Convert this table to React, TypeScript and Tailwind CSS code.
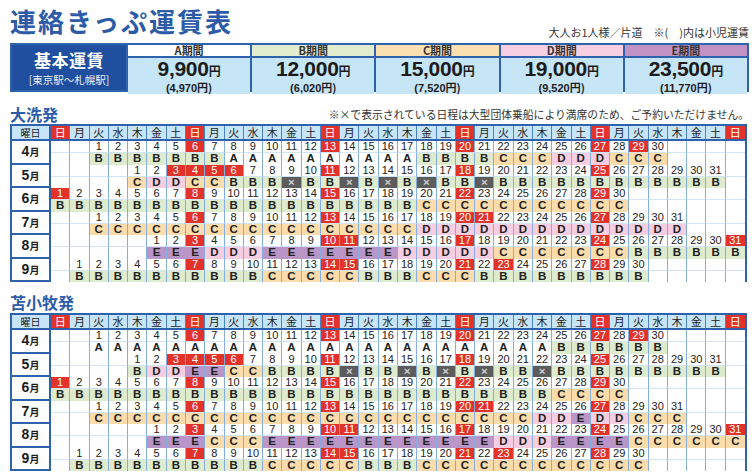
import React from 'react';

const BLUE = 'border-[#2e62ad]';

const letterBg: Record<string, string> = {
  A: 'bg-white text-[#222]',
  B: 'bg-[#deebcd] text-[#222]',
  C: 'bg-[#fcdcab] text-[#222]',
  D: 'bg-[#f7cde1] text-[#222]',
  E: 'bg-[#b995c8] text-[#222]',
  X: 'bg-[#5c5c5c] text-[#cfcfcf]',
};

const r = (c: string, n: number) => c.repeat(n);

type Month = { m: number; start: number; len: number; red: number[]; cls: string };

const reds: Record<number, number[]> = {
  4: [6, 13, 20, 27, 29],
  5: [3, 4, 5, 6, 11, 18, 25],
  6: [1, 8, 15, 22, 29],
  7: [6, 13, 20, 21, 27],
  8: [3, 10, 11, 17, 24, 31],
  9: [7, 14, 15, 21, 23, 28],
};

const mk = (m: number, start: number, len: number, cls: string): Month => ({
  m,
  start,
  len,
  red: reds[m],
  cls,
});

const oarai: Month[] = [
  mk(4, 2, 30, r('B', 7) + r('A', 10) + r('B', 4) + r('C', 3) + r('D', 3) + r('C', 3)),
  mk(5, 4, 31, 'CDDCCBBBXBBXBXBXBBXB' + r('B', 11)),
  mk(6, 0, 30, r('B', 19) + r('C', 11)),
  mk(7, 2, 31, r('C', 17) + r('D', 14)),
  mk(8, 5, 31, r('E', 3) + r('D', 3) + r('E', 7) + r('D', 5) + r('C', 7) + r('B', 6)),
  mk(9, 1, 30, r('B', 10) + r('C', 5) + r('B', 3) + r('C', 3) + r('B', 9)),
];

const tomakomai: Month[] = [
  mk(4, 2, 30, r('A', 24) + r('B', 6)),
  mk(5, 4, 31, 'BDDEECCBBBBXBBXBXBXBBX' + r('B', 9)),
  mk(6, 0, 30, r('B', 26) + r('C', 4)),
  mk(7, 2, 31, r('C', 23) + 'DDEDD' + r('C', 3)),
  mk(8, 5, 31, r('E', 3) + r('C', 3) + r('E', 12) + r('D', 3) + r('E', 4) + r('C', 6)),
  mk(9, 1, 30, r('B', 10) + r('C', 5) + r('B', 3) + r('C', 12)),
];

const weekdays = ['日', '月', '火', '水', '木', '金', '土'];

const prices = [
  { label: 'A', head: 'bg-white', adult: '9,900', child: '4,970' },
  { label: 'B', head: 'bg-[#e2edcf]', adult: '12,000', child: '6,020' },
  { label: 'C', head: 'bg-[#fbe1b1]', adult: '15,000', child: '7,520' },
  { label: 'D', head: 'bg-[#f6cfe2]', adult: '19,000', child: '9,520' },
  { label: 'E', head: 'bg-[#c193c4]', adult: '23,500', child: '11,770' },
];

const MonthRow = ({ mo }: { mo: Month }) => {
  const days = Array.from({ length: 36 }, (_, i) => {
    const d = i - mo.start + 1;
    return d >= 1 && d <= mo.len ? d : 0;
  });
  return (
    <div className={`flex h-[23.5px] border-b-2 ${BLUE}`}>
      <div className={`w-[39px] shrink-0 border-r-2 ${BLUE} bg-white flex items-center justify-center font-bold text-[#1c1c1c]`}>
        <span className="text-[14px] font-['Liberation_Sans',sans-serif]">{mo.m}</span>
        <span className="text-[10px]">月</span>
      </div>
      <div className="flex-1 grid grid-cols-[repeat(36,minmax(0,1fr))] grid-rows-[12px_1fr]">
        {days.map((d, i) => {
          const red = d > 0 && mo.red.includes(d);
          return (
            <div
              key={'n' + i}
              className={`flex items-center justify-center text-[11px] leading-none font-['Liberation_Sans',sans-serif] border-b border-[#d3e5f5] ${
                i < 35 ? 'border-r border-r-[#86ade0]' : ''
              } ${red ? 'bg-[#e3322a] text-white' : 'bg-white text-[#222]'}`}
            >
              {d > 0 ? d : ''}
            </div>
          );
        })}
        {days.map((d, i) => {
          const c = d > 0 ? mo.cls[d - 1] : '';
          return (
            <div
              key={'l' + i}
              className={`flex items-center justify-center text-[11.5px] leading-none font-bold font-['Liberation_Sans',sans-serif] ${
                i < 35 ? 'border-r border-[#86ade0]' : ''
              } ${c ? letterBg[c] : 'bg-white'}`}
            >
              {c === 'X' ? '×' : c}
            </div>
          );
        })}
      </div>
    </div>
  );
};

const Calendar = ({ months }: { months: Month[] }) => (
  <div className={`w-[737px] border-x-2 border-t-2 ${BLUE}`}>
    <div className={`flex h-[15px] border-b-2 ${BLUE}`}>
      <div className={`w-[39px] shrink-0 border-r-2 ${BLUE} bg-[#c7e5f8] flex items-center justify-center text-[10px] text-[#222]`}>
        曜日
      </div>
      <div className="flex-1 grid grid-cols-[repeat(36,minmax(0,1fr))]">
        {Array.from({ length: 36 }, (_, i) => (
          <div
            key={i}
            className={`flex items-center justify-center text-[11px] leading-none ${
              i < 35 ? 'border-r border-[#4b82c6]' : ''
            } ${i % 7 === 0 ? 'bg-[#e3322a] text-white' : 'bg-[#c7e5f8] text-[#222]'}`}
          >
            {weekdays[i % 7]}
          </div>
        ))}
      </div>
    </div>
    {months.map((mo) => (
      <MonthRow key={mo.m} mo={mo} />
    ))}
  </div>
);

export default function App() {
  return (
    <div className="w-[756px] h-[476px] overflow-hidden bg-white pl-[10px] font-['Noto_Sans_CJK_JP',sans-serif] text-[#222]">
      <div className="w-[739px] h-[43px] flex justify-between items-end">
        <h1 className="self-start mt-[5px] text-[26px] leading-[31px] font-bold tracking-[2px] text-[#2d5ba8]">
          連絡きっぷ運賃表
        </h1>
        <div className="pb-[5px] text-[11px] leading-[12px] text-[#333]">大人お1人様／片道　※(　)内は小児運賃</div>
      </div>

      <div className={`flex w-[739px] h-[49px] border-2 ${BLUE}`}>
        <div className="w-[114px] shrink-0 bg-[#1f4f9e] flex flex-col items-center justify-center text-white">
          <div className="text-[17px] font-bold leading-[24px] tracking-[0.5px]">基本運賃</div>
          <div className="text-[10.5px] leading-[16px] text-[#e8eef8]">[東京駅～札幌駅]</div>
        </div>
        {prices.map((p) => (
          <div key={p.label} className={`flex-1 border-l-2 ${BLUE} flex flex-col`}>
            <div
              className={`h-[13px] ${p.head} border-b-2 ${BLUE} flex items-center justify-center text-[11px] leading-none font-bold text-[#333]`}
            >
              {p.label}期間
            </div>
            <div className="flex-1 bg-[#c6e5f7] flex flex-col items-center text-[#1c1c1c]">
              <div className="leading-[20px] mt-[1px]">
                <span className="text-[21px] font-bold tracking-[-0.3px] font-['Liberation_Sans',sans-serif]">{p.adult}</span>
                <span className="text-[12px] font-bold">円</span>
              </div>
              <div className="text-[11px] leading-[12px] font-bold">
                <span className="font-['Liberation_Sans',sans-serif]">({p.child}</span>円)
              </div>
            </div>
          </div>
        ))}
      </div>

      <div className="w-[739px] h-[32px] pt-[12px] flex items-center justify-between">
        <div className="text-[16px] font-bold text-[#2d5ca9] leading-none">大洗発</div>
        <div className="text-[10.8px] leading-none text-[#333]">
          ※×で表示されている日程は大型団体乗船により満席のため、ご予約いただけません。
        </div>
      </div>
      <Calendar months={oarai} />

      <div className="w-[739px] h-[31px] pt-[9px] flex items-center">
        <div className="text-[16px] font-bold text-[#2d5ca9] leading-none">苫小牧発</div>
      </div>
      <Calendar months={tomakomai} />
    </div>
  );
}
